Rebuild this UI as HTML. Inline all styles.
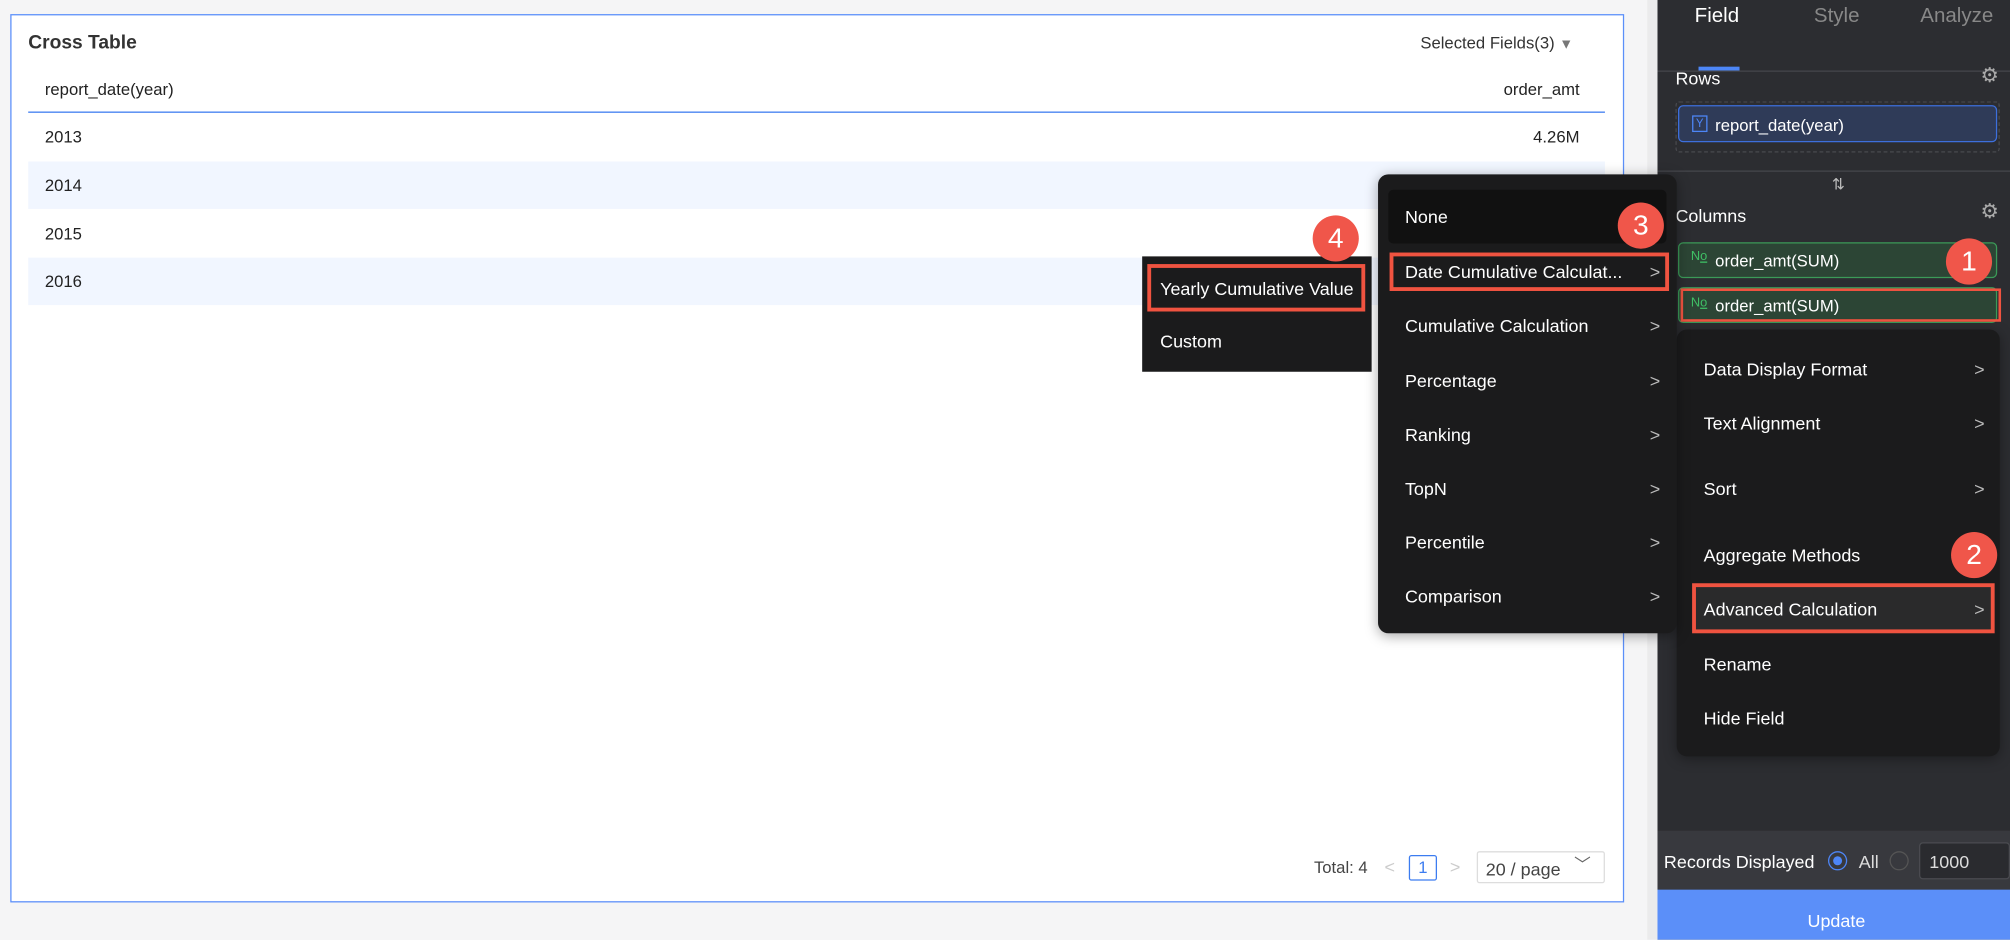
<!DOCTYPE html>
<html><head><meta charset="utf-8"><style>
*{box-sizing:border-box;margin:0;padding:0}
html,body{width:2010px;height:940px;overflow:hidden;background:#f5f5f6;font-family:"Liberation Sans",Arial,sans-serif}
#w{position:absolute;left:0;top:0;width:1568px;height:733px;transform:scale(1.2819);transform-origin:0 0}
.a{position:absolute}
.t{position:absolute;white-space:nowrap;line-height:1}
.card{left:8px;top:11px;width:1259px;height:693px;background:#fff;border:1px solid #5b8ff9}
.row{left:22px;width:1230px;height:37px}
.menu{background:#1b1b1c;border-radius:8px;box-shadow:0 2px 10px rgba(0,0,0,.35)}
.mi{color:#fff;font-size:14px}
.chev{color:#bbb;font-size:14px}
.red{border:3px solid #f05340}
.badge{width:36px;height:36px;border-radius:50%;background:#f0564a;color:#fff;font-size:22px;text-align:center;line-height:36px}
</style></head><body><div id="w">
<div class="a card"></div>
<div class="t" style="left:22px;top:26px;font-size:15px;font-weight:bold;color:#333">Cross Table</div>
<div class="t" style="left:1108px;top:27px;font-size:13px;color:#333">Selected Fields(3) <span style="color:#777;font-size:11px">▼</span></div>
<div class="t" style="left:35px;top:63px;font-size:13px;color:#222">report_date(year)</div>
<div class="t" style="left:1173px;top:63px;font-size:13px;color:#222">order_amt</div>
<div class="a" style="left:22px;top:87px;width:1230px;height:1px;background:#3c7cf0"></div>
<div class="a row" style="top:126px;background:#f1f6ff"></div>
<div class="a row" style="top:201px;background:#f1f6ff"></div>
<div class="t" style="left:35px;top:100px;font-size:13px;color:#222">2013</div>
<div class="t" style="left:1196px;top:100px;font-size:13px;color:#222">4.26M</div>
<div class="t" style="left:35px;top:138px;font-size:13px;color:#222">2014</div>
<div class="t" style="left:35px;top:176px;font-size:13px;color:#222">2015</div>
<div class="t" style="left:35px;top:213px;font-size:13px;color:#222">2016</div>
<div class="t" style="left:1025px;top:670px;font-size:13px;color:#444">Total: 4</div>
<div class="t" style="left:1080px;top:669px;font-size:14px;color:#ccc">&lt;</div>
<div class="a" style="left:1099px;top:667px;width:22px;height:20px;border:1px solid #3c7cf0;border-radius:2px;color:#3c7cf0;font-size:13px;text-align:center;line-height:18px">1</div>
<div class="t" style="left:1131px;top:669px;font-size:14px;color:#ccc">&gt;</div>
<div class="a" style="left:1152px;top:664px;width:100px;height:25px;border:1px solid #ddd;border-radius:2px"></div>
<div class="t" style="left:1159px;top:671px;font-size:14px;color:#444">20 / page</div>
<div class="t" style="left:1228px;top:668px;font-size:13px;color:#666">﹀</div>
<div class="a" style="left:1285px;top:0;width:8px;height:733px;background:#ebebec"></div>
<div class="a" style="left:1293px;top:0;width:275px;height:733px;background:#2c2d31"></div>
<div class="a" style="left:1293px;top:55px;width:275px;height:1px;background:#45464b"></div>
<div class="t" style="left:1322px;top:5px;font-size:16px;color:#fff">Field</div>
<div class="t" style="left:1415px;top:5px;font-size:16px;color:#888">Style</div>
<div class="t" style="left:1498px;top:5px;font-size:16px;color:#888">Analyze</div>
<div class="a" style="left:1325px;top:52px;width:32px;height:3px;background:#4d86f7"></div>
<div class="t" style="left:1307px;top:54px;font-size:14px;color:#fff">Rows</div>
<div class="t" style="left:1545px;top:52px;font-size:16px;color:#aaa">⚙</div>
<div class="a" style="left:1307px;top:79px;width:253px;height:40px;border:1px dashed #4a4b50;border-radius:3px"></div>
<div class="a" style="left:1309px;top:82px;width:249px;height:29px;background:#2f3b58;border:1px solid #3d6fdc;border-radius:4px"></div>
<div class="a" style="left:1320px;top:90px;width:12px;height:13px;border:1px solid #4d86f7;color:#4d86f7;font-size:9px;text-align:center;line-height:11px">Y</div>
<div class="t" style="left:1338px;top:91px;font-size:13px;color:#fff">report_date(year)</div>
<div class="a" style="left:1293px;top:133px;width:275px;height:1px;background:#45464b"></div>
<div class="t" style="left:1429px;top:138px;font-size:12px;color:#bbb">⇅</div>
<div class="t" style="left:1307px;top:161px;font-size:14px;color:#fff">Columns</div>
<div class="t" style="left:1545px;top:158px;font-size:16px;color:#aaa">⚙</div>
<div class="a" style="left:1309px;top:189px;width:249px;height:28px;background:#2c4535;border:1px solid #3b9a58;border-radius:4px"></div>
<div class="t" style="left:1319px;top:196px;font-size:10px;color:#3fbf65">N<u>o</u></div>
<div class="t" style="left:1338px;top:197px;font-size:13px;color:#fff">order_amt(SUM)</div>
<div class="a" style="left:1309px;top:224px;width:249px;height:28px;background:#2c4535;border:1px solid #3b9a58;border-radius:4px"></div>
<div class="a red" style="left:1311px;top:225px;width:250px;height:26px;border-width:2px"></div>
<div class="t" style="left:1319px;top:232px;font-size:10px;color:#3fbf65">N<u>o</u></div>
<div class="t" style="left:1338px;top:232px;font-size:13px;color:#fff">order_amt(SUM)</div>
<div class="a badge" style="left:1518px;top:186px">1</div>
<div class="a menu" style="left:1308px;top:257px;width:252px;height:333px"></div>
<div class="t mi" style="left:1329px;top:281px">Data Display Format</div><div class="t chev" style="left:1540px;top:281px">&gt;</div>
<div class="t mi" style="left:1329px;top:323px">Text Alignment</div><div class="t chev" style="left:1540px;top:323px">&gt;</div>
<div class="t mi" style="left:1329px;top:374px">Sort</div><div class="t chev" style="left:1540px;top:374px">&gt;</div>
<div class="t mi" style="left:1329px;top:426px">Aggregate Methods</div>
<div class="a" style="left:1320px;top:455px;width:236px;height:39px;background:#2a2a2b"></div>
<div class="a red" style="left:1320px;top:455px;width:236px;height:39px"></div>
<div class="t mi" style="left:1329px;top:468px">Advanced Calculation</div><div class="t chev" style="left:1540px;top:468px">&gt;</div>
<div class="t mi" style="left:1329px;top:511px">Rename</div>
<div class="t mi" style="left:1329px;top:553px">Hide Field</div>
<div class="a badge" style="left:1522px;top:415px">2</div>
<div class="a" style="left:1293px;top:648px;width:275px;height:46px;background:#38393e"></div>
<div class="t" style="left:1298px;top:665px;font-size:14px;color:#fff">Records Displayed</div>
<div class="a" style="left:1426px;top:664px;width:15px;height:15px;border:1px solid #4d86f7;border-radius:50%"></div>
<div class="a" style="left:1430px;top:668px;width:7px;height:7px;background:#4d86f7;border-radius:50%"></div>
<div class="t" style="left:1450px;top:665px;font-size:14px;color:#ddd">All</div>
<div class="a" style="left:1474px;top:664px;width:15px;height:15px;border:1px solid #555;border-radius:50%"></div>
<div class="a" style="left:1497px;top:657px;width:71px;height:29px;background:#2a2b2f;border:1px solid #4a4b50;border-radius:3px"></div>
<div class="t" style="left:1505px;top:665px;font-size:14px;color:#ddd">1000</div>
<div class="a" style="left:1293px;top:694px;width:275px;height:39px;background:#5b8ff9"></div>
<div class="t" style="left:1410px;top:711px;font-size:14px;color:#fff">Update</div>
<div class="a menu" style="left:1075px;top:136px;width:233px;height:358px"></div>
<div class="a" style="left:1083px;top:148px;width:217px;height:42px;background:#111;border-radius:4px"></div>
<div class="t mi" style="left:1096px;top:162px">None</div>
<div class="a red" style="left:1084px;top:197px;width:218px;height:30px"></div>
<div class="t mi" style="left:1096px;top:205px">Date Cumulative Calculat...</div><div class="t chev" style="left:1287px;top:205px">&gt;</div>
<div class="t mi" style="left:1096px;top:247px">Cumulative Calculation</div><div class="t chev" style="left:1287px;top:247px">&gt;</div>
<div class="t mi" style="left:1096px;top:290px">Percentage</div><div class="t chev" style="left:1287px;top:290px">&gt;</div>
<div class="t mi" style="left:1096px;top:332px">Ranking</div><div class="t chev" style="left:1287px;top:332px">&gt;</div>
<div class="t mi" style="left:1096px;top:374px">TopN</div><div class="t chev" style="left:1287px;top:374px">&gt;</div>
<div class="t mi" style="left:1096px;top:416px">Percentile</div><div class="t chev" style="left:1287px;top:416px">&gt;</div>
<div class="t mi" style="left:1096px;top:458px">Comparison</div><div class="t chev" style="left:1287px;top:458px">&gt;</div>
<div class="a badge" style="left:1262px;top:158px">3</div>
<div class="a" style="left:891px;top:200px;width:179px;height:90px;background:#1b1b1c"></div>
<div class="a red" style="left:895px;top:206px;width:170px;height:37px"></div>
<div class="t mi" style="left:905px;top:218px">Yearly Cumulative Value</div>
<div class="t mi" style="left:905px;top:259px">Custom</div>
<div class="a badge" style="left:1024px;top:168px">4</div>
</div></body></html>
